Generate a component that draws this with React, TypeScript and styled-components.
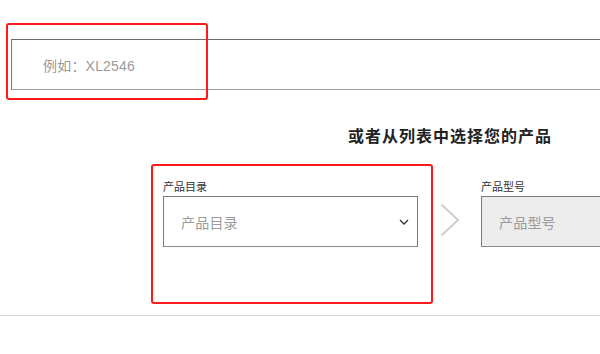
import React from "react";
import styled, { createGlobalStyle } from "styled-components";

const GlobalStyle = createGlobalStyle`
  html, body {
    margin: 0;
    padding: 0;
    background: #ffffff;
    overflow: hidden;
  }
  body {
    font-family: "Liberation Sans", "Noto Sans CJK SC", sans-serif;
  }
`;

const fontStack = `"Liberation Sans", "Noto Sans CJK SC", sans-serif`;

export default function App() {
  return (
    <Page>
      <GlobalStyle />
      <SearchBox>
        <Placeholder>例如：XL2546</Placeholder>
      </SearchBox>

      <Heading>或者从列表中选择您的产品</Heading>

      <PickerRow>
        <Field>
          <FieldLabel>产品目录</FieldLabel>
          <SelectBox>
            <Placeholder>产品目录</Placeholder>
            <svg width="10" height="6" viewBox="0 0 10 6">
              <path d="M1 1l4 4 4-4" fill="none" stroke="#333" strokeWidth="1.3" />
            </svg>
          </SelectBox>
        </Field>
        <StepArrow>
          <svg width="20" height="34" viewBox="0 0 20 34">
            <path d="M1.5 1.5L18 17 1.5 32.5" fill="none" stroke="#cfcfcf" strokeWidth="2" />
          </svg>
        </StepArrow>
        <Field $grow>
          <FieldLabel>产品型号</FieldLabel>
          <SelectBox $disabled>
            <Placeholder>产品型号</Placeholder>
          </SelectBox>
        </Field>
      </PickerRow>

      <Divider />

      <Highlight style={{ left: 6, top: 23, width: 202, height: 77 }} />
      <Highlight style={{ left: 151, top: 164, width: 282, height: 140 }} />
    </Page>
  );
}

const Page = styled.div`
  position: relative;
  width: 600px;
  height: 354px;
  padding-top: 39px;
  box-sizing: border-box;
`;

const SearchBox = styled.div`
  margin: 0 -20px 0 11px;
  height: 51px;
  box-sizing: border-box;
  border: 1px solid #777777;
  border-top-color: #6c6c6c;
  border-bottom-color: #9c9c9c;
  display: flex;
  align-items: center;
  padding-left: 31px;
`;

const Placeholder = styled.span`
  font-family: ${fontStack};
  font-size: 14px;
  color: #9a9a9a;
  letter-spacing: 0.2px;
`;

const Heading = styled.h2`
  margin: 35px 0 0 348px;
  font-family: "Noto Sans CJK SC", sans-serif;
  font-size: 16px;
  line-height: 20px;
  font-weight: 700;
  letter-spacing: 1px;
  color: #222222;
`;

const PickerRow = styled.div`
  display: flex;
  align-items: flex-start;
  margin: 34px -20px 0 163px;
`;

const Field = styled.div<{ $grow?: boolean }>`
  display: flex;
  flex-direction: column;
  width: ${(p) => (p.$grow ? "auto" : "255px")};
  flex: ${(p) => (p.$grow ? "1" : "none")};
`;

const FieldLabel = styled.label`
  font-family: "Noto Sans CJK SC", sans-serif;
  font-size: 11px;
  line-height: 14px;
  color: #333333;
  margin-bottom: 3px;
`;

const SelectBox = styled.div<{ $disabled?: boolean }>`
  height: 51px;
  box-sizing: border-box;
  border: 1px solid #7a7a7a;
  border-bottom-color: #8a8a8a;
  background: ${(p) => (p.$disabled ? "#ececec" : "#ffffff")};
  display: flex;
  align-items: center;
  justify-content: space-between;
  padding: 0 8px 0 17px;
`;

const StepArrow = styled.div`
  width: 63px;
  flex: none;
  padding: 24px 0 0 22px;
  box-sizing: border-box;
  display: flex;
`;

const Divider = styled.hr`
  margin: 68px 0 0;
  border: 0;
  border-top: 1px solid #d4d4d4;
`;

const Highlight = styled.div`
  position: absolute;
  box-sizing: border-box;
  border: 2px solid #ff1a1a;
  border-radius: 3px;
  pointer-events: none;
`;
